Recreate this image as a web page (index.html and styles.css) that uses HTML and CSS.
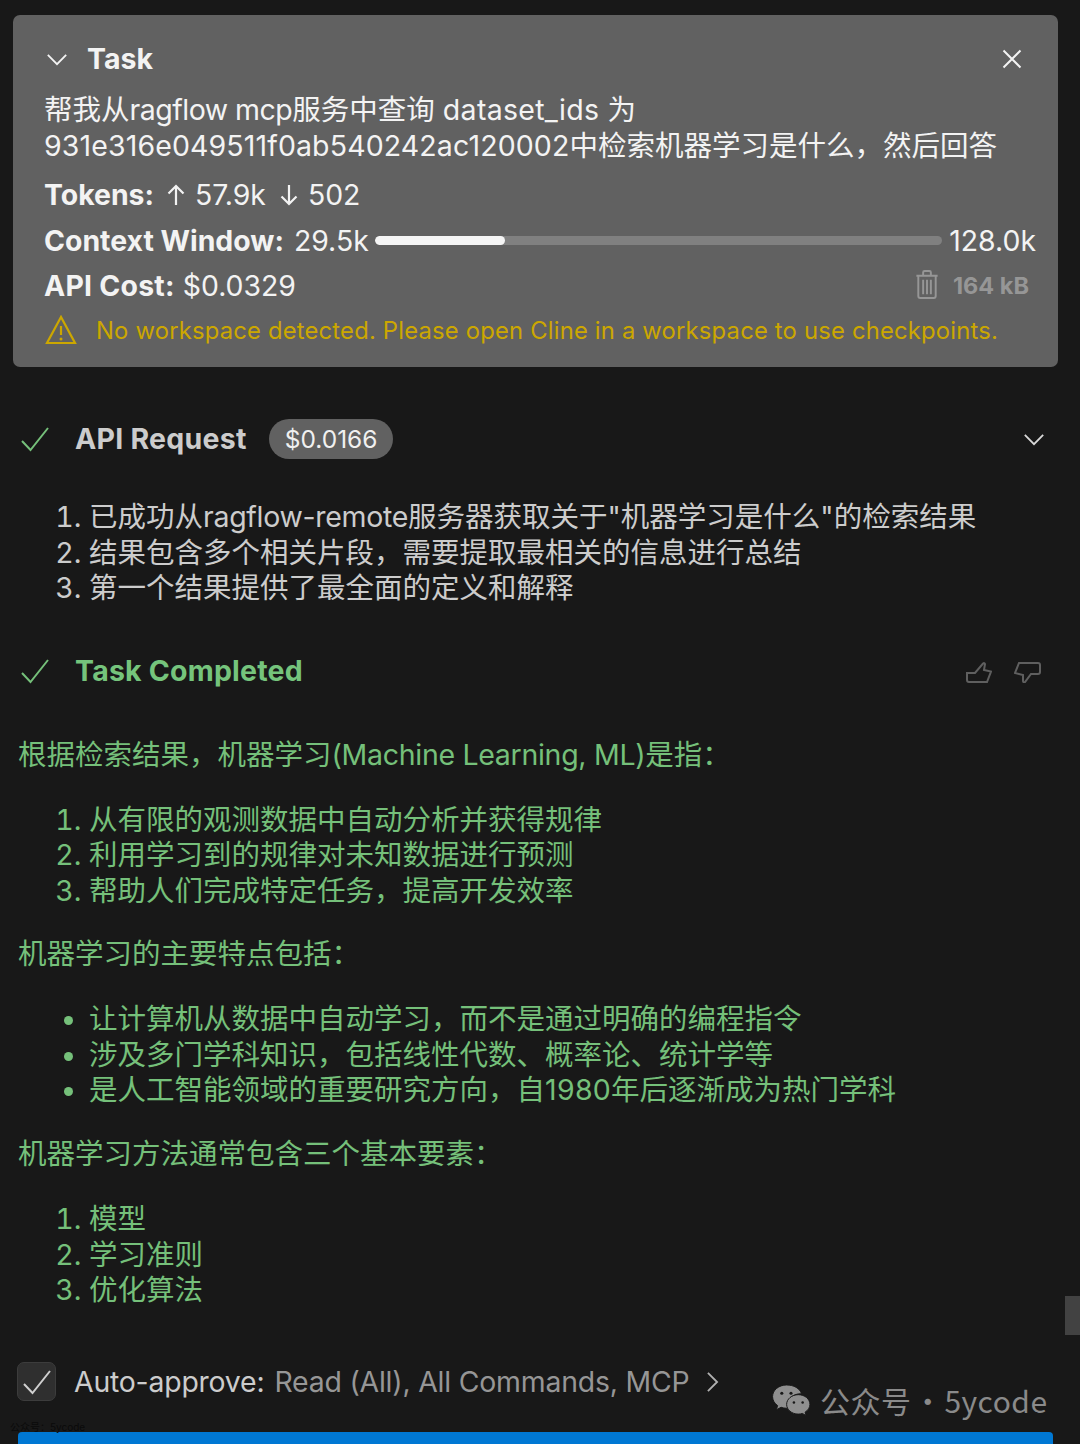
FILE: index.html
```html
<!DOCTYPE html>
<html lang="zh">
<head>
<meta charset="utf-8">
<title>Task</title>
<link rel="stylesheet" href="styles.css">
</head>
<body>
<main class="page">
  <section class="task-card">
    <div class="task-head">
      <div class="task-title">
        <svg class="ico-chev" viewBox="0 0 24 14"><path d="M2 2l10 10L22 2"/></svg>
        <strong>Task</strong>
      </div>
      <svg class="ico-close" viewBox="0 0 20 20"><path d="M1.500 1.500l17 17M18.500 1.500l-17 17"/></svg>
    </div>
    <p class="task-text">帮我从<span class="tightest">ragflow mcp</span>服务中查询 <span class="spaced-wide">dataset_ids</span> 为<br><span class="spaced">931e316e049511f0ab540242ac120002</span>中检索机器学习是什么，然后回答</p>
    <div class="stat stat-tokens"><strong>Tokens:</strong>
      <svg class="ico-arrow" viewBox="0 0 20 22"><path d="M10 21V2M2.500 9.500L10 2l7.500 7.500"/></svg><span>57.9k</span>
      <svg class="ico-arrow ico-down" viewBox="0 0 20 22"><path d="M10 1v19M2.500 12.500L10 20l7.500-7.500"/></svg><span>502</span>
    </div>
    <div class="stat stat-context"><strong>Context Window:</strong><span class="ctx-used">29.5k</span>
      <div class="bar"><div class="bar-fill"></div></div>
      <span>128.0k</span>
    </div>
    <div class="stat stat-cost">
      <div><strong>API Cost:</strong> <span>$0.0329</span></div>
      <div class="delete">
        <svg class="ico-trash" viewBox="0 0 24 30"><path d="M1 6h22M8 6V2.500A1.500 1.500 0 0 1 9.500 1h5A1.500 1.500 0 0 1 16 2.500V6M3 6v21a2 2 0 0 0 2 2h14a2 2 0 0 0 2-2V6M8 10v15M12 10v15M16 10v15"/></svg>
        <span>164 kB</span>
      </div>
    </div>
    <div class="warn">
      <svg class="ico-warn" viewBox="0 0 32 30"><path d="M16 2L2 28h28zM16 11v9"/><circle cx="16" cy="24" r="1.500"/></svg>
      <span>No workspace detected. Please open Cline in a workspace to use checkpoints.</span>
    </div>
  </section>

  <div class="row row-api">
    <svg class="ico-check" viewBox="0 0 30 26"><path d="M2 15l8.500 9L28 2"/></svg>
    <strong class="row-title">API Request</strong>
    <span class="pill">$0.0166</span>
    <svg class="ico-chev ico-chev-end" viewBox="0 0 24 14"><path d="M2 2l10 10L22 2"/></svg>
  </div>
  <ol class="list list-grey">
    <li>已成功从<span class="tighter">ragflow-remote</span>服务器获取关于"机器学习是什么"的检索结果</li>
    <li>结果包含多个相关片段，需要提取最相关的信息进行总结</li>
    <li>第一个结果提供了最全面的定义和解释</li>
  </ol>

  <div class="row row-done">
    <svg class="ico-check" viewBox="0 0 30 26"><path d="M2 15l8.500 9L28 2"/></svg>
    <strong class="row-title done">Task Completed</strong>
    <div class="thumbs">
      <svg class="ico-thumb-up" viewBox="0 0 26 21"><path d="M1 11h8l8-9.500q1.500-1 2 .5l-1 6 7 1.500-4 10.500H3q-2 0-2-2z"/></svg>
      <svg class="ico-thumb-down" viewBox="0 0 28 21"><path d="M5 1h19q2 0 2 2v7q0 2-2 2h-7l-6 8q-2 0.500-2-1v-6l-8-2z"/></svg>
    </div>
  </div>
  <div class="answer">
    <p>根据检索结果，机器学习<span class="tighter">(Machine Learning, ML)</span>是指：</p>
    <ol class="list">
      <li>从有限的观测数据中自动分析并获得规律</li>
      <li>利用学习到的规律对未知数据进行预测</li>
      <li>帮助人们完成特定任务，提高开发效率</li>
    </ol>
    <p>机器学习的主要特点包括：</p>
    <ul class="list">
      <li>让计算机从数据中自动学习，而不是通过明确的编程指令</li>
      <li>涉及多门学科知识，包括线性代数、概率论、统计学等</li>
      <li>是人工智能领域的重要研究方向，自<span class="spaced-wide">1980</span>年后逐渐成为热门学科</li>
    </ul>
    <p>机器学习方法通常包含三个基本要素：</p>
    <ol class="list">
      <li>模型</li>
      <li>学习准则</li>
      <li>优化算法</li>
    </ol>
  </div>

  <div class="approve">
    <span class="checkbox"><svg viewBox="0 0 30 26"><path d="M2 15l8.500 9L28 2"/></svg></span>
    <span class="approve-label">Auto-approve:</span>
    <span class="approve-val">Read (All), All Commands, MCP</span>
    <svg class="ico-next" viewBox="0 0 14 24"><path d="M2 2l10 10L2 22"/></svg>
  </div>
  <div class="primary-btn"></div>
</main>

<div class="scroll-thumb"></div>
<div class="mark-small">公众号：5ycode</div>
<div class="mark">
  <svg class="ico-wechat" viewBox="0 0 40 34">
    <path class="wc-a" d="M15.500 1C7.500 1 1 6.300 1 13c0 3.700 2 7 5.200 9.200L5 26.500l4.800-2.500c1.700.6 3.700 1 5.700 1 .6 0 1.200 0 1.800-.1-.4-1.100-.6-2.300-.6-3.500 0-6.300 6-11.400 13.400-11.400h.8C29 4.500 22.900 1 15.500 1z"/>
    <path class="wc-a" d="M39.500 21c0-5.500-5.300-10-12-10s-12 4.500-12 10 5.300 10 12 10c1.500 0 2.900-.2 4.200-.7l3.800 2.200-1-3.500c3-1.800 5-4.700 5-8z"/>
    <circle class="wc-b" cx="10.500" cy="9.500" r="1.600"/><circle class="wc-b" cx="20" cy="9.500" r="1.600"/>
    <circle class="wc-b" cx="23" cy="19" r="1.300"/><circle class="wc-b" cx="32" cy="19" r="1.300"/>
  </svg>
  <span>公众号 · 5ycode</span>
</div>
</body>
</html>
```

FILE: styles.css
```css
* { box-sizing: border-box; }
html, body { margin: 0; padding: 0; }
body {
  width: 1080px;
  height: 1444px;
  overflow: hidden;
  background: #181818;
  color: #cccccc;
  font-family: Inter, "Noto Sans CJK SC", sans-serif;
  font-size: 28.5px;
  line-height: 35.5px;
  position: relative;
}
svg { fill: none; stroke: currentColor; flex: none; display: block; }
p { margin: 0; }

.page { padding: 15px 22px 0 13px; }

.task-card {
  height: 352px;
  background: #616161;
  border-radius: 7px;
  padding: 26px 22px 0 31px;
  color: #f3f3f3;
}
.task-head { display: flex; justify-content: space-between; align-items: center; height: 36px; padding-right: 14px; }
.task-title { display: flex; align-items: center; gap: 19px; padding-left: 2px; }
.task-title strong { font-weight: 700; }
.ico-chev { width: 22px; height: 13px; stroke-width: 2; }
.ico-close { width: 20px; height: 20px; stroke-width: 2; }
.task-text { margin-top: 15px; }
.spaced { letter-spacing: 0.12px; }
.spaced-wide { letter-spacing: 0.3px; }
.tighter { letter-spacing: -0.3px; }
.tightest { letter-spacing: -0.5px; }

.stat { display: flex; align-items: center; height: 35.5px; white-space: pre; font-size: 28.400px; }
.stat strong { font-weight: 700; }
.stat-tokens { margin-top: 14px; }
.stat-context { margin-top: 10px; }
.stat-cost { margin-top: 9.500px; justify-content: space-between; padding-right: 7px; }
.stat-cost strong { letter-spacing: 0.25px; }
.ctx-used { margin-left: 10px; }
.ico-arrow { width: 20px; height: 22px; stroke-width: 2.200; margin: 0 9px 0 12px; }
.ico-down { margin-left: 13px; }
.bar { flex: 1; height: 9px; margin: 0 7px 0 6px; border-radius: 5px; background: #808080; overflow: hidden; }
.bar-fill { width: 23%; height: 100%; border-radius: 5px; background: #f5f5f5; }
.delete { display: flex; align-items: center; gap: 14px; color: #969696; font-size: 23.500px; font-weight: 700; }
.ico-trash { width: 24px; height: 29px; stroke-width: 2; margin-top: -1px; }
.warn { display: flex; align-items: center; gap: 19px; margin-top: 9.500px; color: #cca700; font-size: 23.800px; letter-spacing: 0.19px; padding-left: 1px; }
.ico-warn { width: 32px; height: 30px; stroke-width: 2.200; }
.ico-warn circle { fill: currentColor; stroke: none; }

.row { display: flex; align-items: center; height: 40px; padding-left: 7px; }
.row-api { margin-top: 52px; }
.row-done { margin-top: 45px; }
.row-title { margin-left: 25px; font-weight: 700; letter-spacing: 0.25px; }
.done { color: #75c47c; letter-spacing: 0.2px; }
.ico-check { width: 30px; height: 26px; color: #75c07a; stroke-width: 2; }
.pill { margin-left: 22px; padding: 0 16px; height: 40px; line-height: 40px; border-radius: 20px; background: #616161; color: #f0f0f0; font-size: 24.500px; }
.ico-chev-end { margin-left: auto; margin-right: 13px; color: #d8d8d8; }
.thumbs { margin-left: auto; display: flex; gap: 22px; padding: 3px 16px 0 0; color: #5f5f5f; }
.ico-thumb-up { width: 26px; height: 21px; stroke-width: 2; }
.ico-thumb-down { width: 28px; height: 21px; stroke-width: 2; }

.list { margin: 0; padding: 0 0 0 76px; }
.list-grey { margin-top: 40px; }
.answer { margin-top: 46px; padding-left: 5px; color: #75c07a; }
.answer .list { padding-left: 71px; margin: 29.600px 0 28.300px; }

.approve { display: flex; align-items: center; height: 40px; margin-top: 54.100px; padding-left: 4px; letter-spacing: -0.2px; font-size: 28.400px; }
.checkbox { width: 39px; height: 39px; border-radius: 7px; background: #2f2f2f; border: 1px solid #3c3c3c; display: flex; align-items: center; justify-content: center; margin-right: 18px; color: #cfcfcf; }
.checkbox svg { width: 30px; height: 26px; stroke-width: 2; }
.approve-label { white-space: pre; }
.approve-val { margin-left: 10px; color: #969696; }
.ico-next { width: 13px; height: 22px; stroke-width: 2; margin-left: 17px; color: #b0b0b0; }
.primary-btn { margin: 30px 0 0 5px; width: 1035px; height: 40px; background: #0078d4; border-radius: 4px 4px 0 0; }

.scroll-thumb { position: absolute; right: 0; top: 1296px; width: 15px; height: 39px; background: #424242; }
.mark-small { position: absolute; left: 10px; top: 1420px; font-size: 10px; line-height: 14px; color: #0a0a0a; }
.mark { position: absolute; left: 771px; top: 1383px; display: flex; align-items: center; gap: 9px; color: #8a8a8a; font-family: "Noto Sans CJK SC", sans-serif; font-size: 30px; letter-spacing: 0.5px; word-spacing: -6px; }
.ico-wechat { width: 40px; height: 33px; stroke: none; }
.wc-a { fill: #8f8f8f; stroke: #181818; stroke-width: 1; }
.wc-b { fill: #181818; }
```
